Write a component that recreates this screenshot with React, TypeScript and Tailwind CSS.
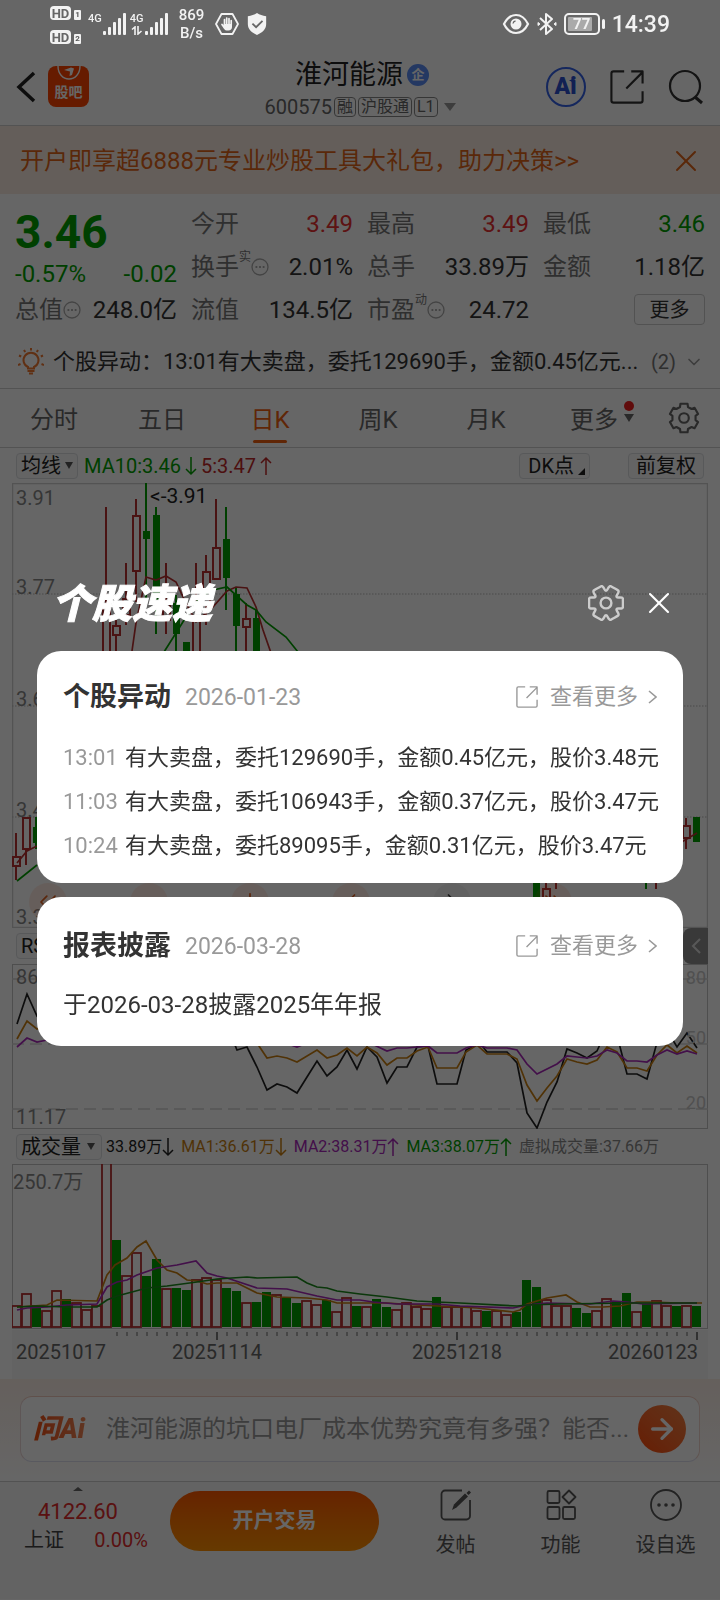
import type { ReactNode } from 'react'
import { ArrowRight, ChevronDown, ChevronLeft, ChevronRight, ChevronsLeft, ChevronsRight, Minus, Plus, X } from 'lucide-react'

type Candle = { i: number; up: boolean; high: number; low: number; top: number; bottom: number }

const candles: Candle[] = [
  { i: 0, up: true, high: 350, low: 397, top: 374, bottom: 383 },
  { i: 1, up: true, high: 334, low: 382, top: 335, bottom: 366 },
  { i: 2, up: false, high: 334, low: 366, top: 344, bottom: 360 },
  { i: 9, up: true, high: 24, low: 240, top: 125, bottom: 240 },
  { i: 10, up: true, high: 137, low: 169, top: 143, bottom: 152 },
  { i: 11, up: true, high: 80, low: 142, top: 116, bottom: 132 },
  { i: 12, up: true, high: 16, low: 119, top: 33, bottom: 88 },
  { i: 13, up: false, high: 0, low: 117, top: 48, bottom: 56 },
  { i: 14, up: false, high: 24, low: 151, top: 32, bottom: 117 },
  { i: 15, up: true, high: 80, low: 151, top: 120, bottom: 137 },
  { i: 16, up: false, high: 112, low: 190, top: 120, bottom: 151 },
  { i: 17, up: false, high: 159, low: 200, top: 159, bottom: 190 },
  { i: 18, up: true, high: 80, low: 190, top: 138, bottom: 176 },
  { i: 19, up: true, high: 72, low: 142, top: 89, bottom: 120 },
  { i: 20, up: true, high: 16, low: 96, top: 65, bottom: 96 },
  { i: 21, up: false, high: 24, low: 127, top: 56, bottom: 95 },
  { i: 22, up: false, high: 104, low: 190, top: 111, bottom: 143 },
  { i: 23, up: true, high: 120, low: 184, top: 136, bottom: 144 },
  { i: 24, up: false, high: 127, low: 200, top: 135, bottom: 190 },
  { i: 52, up: false, high: 385, low: 425, top: 390, bottom: 420 },
  { i: 53, up: true, high: 395, low: 420, top: 406, bottom: 418 },
  { i: 54, up: true, high: 390, low: 406, top: 390, bottom: 396 },
  { i: 63, up: false, high: 380, low: 406, top: 382, bottom: 392 },
  { i: 64, up: true, high: 380, low: 406, top: 382, bottom: 392 },
  { i: 67, up: true, high: 335, low: 366, top: 343, bottom: 355 },
  { i: 68, up: false, high: 334, low: 359, top: 334, bottom: 359 },
]

// positive = up day, negative = down day
const volumes = [
  22, 34, -22, 17, 37, -28, 25, 18, 22, 168, -87, 52, 75, -51, -68, 39, -39, -37, 48, 50, 48, -39, -36, 25, -25, -35, 33,
  -29, -24, 27, 23, -27, 16, 30, -21, 21, -28, -20, 18, 25, 21, 19, -30, 21, 21, 21, 17, -16, 17, 13, -15, -47, -40, 28,
  22, 22, -19, -14, 17, 29, -25, -34, 16, -23, 27, 22, -21, 22, -21,
]

const rsi = {
  fast: '17,60 27,30 37,52 60,40 200,50 227,62 237,86 247,83 257,103 267,126 277,120 287,123 297,129 307,113 317,97 327,112 337,103 347,86 357,105 367,83 377,93 387,119 397,103 407,103 417,83 428,82 437,120 457,120 466,86 480,79 487,88 507,88 517,99 527,149 537,164 547,138 557,118 567,85 577,89 587,94 597,87 602,76 619,79 627,110 637,110 647,115 656,82 667,66 677,83 687,69 697,84',
  mid: '17,75 27,57 37,65 60,56 200,58 252,70 259,82 267,94 277,92 287,94 297,98 317,86 327,94 337,91 347,84 357,92 367,83 377,89 387,101 397,94 407,94 417,87 428,83 437,104 457,104 466,88 477,81 487,90 507,90 517,95 527,121 537,137 547,124 557,112 567,95 577,98 587,100 597,96 607,83 617,88 627,104 637,104 647,107 657,91 667,81 677,89 687,82 697,89',
  slow: '17,83 27,74 37,78 47,76 200,70 288,80 297,83 307,79 370,79 387,87 397,84 407,84 428,82 437,89 457,89 466,84 477,81 487,84 507,84 517,86 527,100 537,110 547,105 557,100 567,92 577,93 587,94 597,92 607,86 617,89 627,97 637,97 647,98 657,91 667,86 677,90 687,87 697,90',
}

const volumeMa = {
  ma1: '17,143 47,141 57,136 97,137 107,111 115,101 127,94 137,83 146,77 157,96 167,106 177,109 187,116 197,117 207,120 217,119 237,119 247,124 257,129 277,133 307,134 327,136 337,139 387,139 417,141 460,143 477,144 513,148 520,146 527,140 537,137 547,134 566,131 577,138 590,143 603,143 620,142 637,138 653,138 677,139 702,139',
  ma2: '17,146 27,144 47,143 67,141 97,140 107,123 117,118 127,116 137,111 157,104 177,101 196,97 207,109 217,112 227,114 257,124 287,125 317,132 337,136 360,136 373,138 397,140 437,140 460,142 513,144 527,141 547,139 590,140 613,137 627,138 643,140 697,139',
  ma3: '17,143 37,142 67,143 97,143 107,136 117,132 147,124 167,122 197,118 217,115 247,113 257,114 297,113 307,119 317,123 327,124 337,127 360,130 387,133 417,137 437,138 460,139 517,142 527,141 560,140 627,139 697,139',
}

const alerts = [
  { time: '13:01', text: '有大卖盘，委托129690手，金额0.45亿元，股价3.48元' },
  { time: '11:03', text: '有大卖盘，委托106943手，金额0.37亿元，股价3.47元' },
  { time: '10:24', text: '有大卖盘，委托89095手，金额0.31亿元，股价3.47元' },
]

const tabs = ['分时', '五日', '日K', '周K', '月K', '更多']

function ring(steps: [number, number][], rotate: number) {
  const points: [number, number][] = []
  for (let k = 0; k < 6; k++) {
    for (const [offset, r] of steps) {
      const a = ((k * 60 + offset + rotate) * Math.PI) / 180
      points.push([12 + r * Math.cos(a), 12 + r * Math.sin(a)])
    }
  }
  return points
}

// six-tooth cog with hard corners
function gearPath(rotate: number) {
  const points = ring([[-14, 11], [14, 11], [20, 8.8], [40, 8.8]], rotate)
  return 'M' + points.map((p) => `${p[0].toFixed(2)} ${p[1].toFixed(2)}`).join('L') + 'Z'
}

// same cog, corners rounded by running curves through the midpoints
function softGearPath(rotate: number) {
  const points = ring([[-19, 11.9], [-8, 11.4], [8, 11.4], [19, 11.9], [30, 7]], rotate)
  const mid = (a: [number, number], b: [number, number]) => `${((a[0] + b[0]) / 2).toFixed(2)} ${((a[1] + b[1]) / 2).toFixed(2)}`
  const n = points.length
  return (
    'M' +
    mid(points[n - 1], points[0]) +
    points.map((p, i) => `Q${p[0].toFixed(2)} ${p[1].toFixed(2)} ${mid(p, points[(i + 1) % n])}`).join('') +
    'Z'
  )
}

function GearIcon({ soft, className }: { soft?: boolean; className: string }) {
  return (
    <svg viewBox="0 0 24 24" className={className} fill="none" stroke="currentColor" strokeWidth="1.6" strokeLinejoin="round">
      <path d={soft ? softGearPath(0) : gearPath(30)} />
      <circle cx="12" cy="12" r="3.6" />
    </svg>
  )
}

function ShareIcon({ className, width = 1.5 }: { className: string; width?: number }) {
  return (
    <svg viewBox="0 0 24 24" className={className} fill="none" stroke="currentColor" strokeWidth={width} strokeLinejoin="round">
      <path d="M10 1H2.500a1.500 1.500 0 0 0-1.500 1.500v19a1.500 1.500 0 0 0 1.500 1.500h19a1.500 1.500 0 0 0 1.500-1.500V15" />
      <path d="M11.500 13L23 1.500M15 1h8v8.500" />
    </svg>
  )
}

function DotsIcon() {
  return (
    <svg viewBox="0 0 18 18" className="size-[18px]" fill="none" stroke="#aaa" strokeWidth="1.300">
      <circle cx="9" cy="9" r="8" />
      <path d="M4.500 9h1.800M8.100 9h1.800M11.700 9h1.800" strokeWidth="1.800" />
    </svg>
  )
}

function Signal() {
  return (
    <svg viewBox="0 0 24 24" className="h-6 w-6" fill="currentColor">
      <rect x="1" y="19" width="3" height="4" rx="1" />
      <rect x="6" y="15" width="3" height="8" rx="1" />
      <rect x="11" y="10" width="3" height="13" rx="1" />
      <rect x="16" y="6" width="3" height="17" rx="1" />
      <rect x="21" y="1" width="3" height="22" rx="1" />
    </svg>
  )
}

function HdBadge({ n }: { n: string }) {
  return (
    <div className="flex items-end gap-[3px]">
      <span className="flex h-[14px] w-[21px] items-center justify-center rounded bg-[#f2f2f2] text-[13px] leading-none font-bold text-[#666]">HD</span>
      <span className="flex h-[10px] w-[7px] items-center justify-center rounded-[1px] bg-[#f2f2f2] text-[8px] leading-none font-bold text-[#555]">{n}</span>
    </div>
  )
}

function StatusBar() {
  return (
    <div className="relative z-20 flex h-12 items-center justify-between pr-[50px] pl-[50px] text-[#f2f2f2]">
      <div className="flex items-center">
        <div className="flex flex-col gap-[10px] pt-[2px]">
          <HdBadge n="1" />
          <HdBadge n="2" />
        </div>
        <div className="ml-[7px] flex items-center">
          <span className="mb-3 text-[11px] leading-none font-medium">4G</span>
          <Signal />
        </div>
        <div className="ml-1 flex items-center">
          <div className="flex flex-col items-center">
            <span className="text-[11px] leading-none font-medium">4G</span>
            <svg viewBox="0 0 12 9" className="mt-[2px] h-[9px] w-3" fill="none" stroke="currentColor" strokeWidth="1.600">
              <path d="M1 3.500L4 1v8M7 0v8L10.500 5" />
            </svg>
          </div>
          <Signal />
        </div>
        <div className="ml-3 flex w-6 flex-col items-center text-[15px] leading-[18px] font-medium">
          <span>869</span>
          <span>B/s</span>
        </div>
        <svg viewBox="0 0 24 24" className="ml-[11px] size-6">
          <path d="M6.500 2h11L23 12l-5.500 10h-11L1 12z" fill="none" stroke="currentColor" strokeWidth="1.800" strokeLinejoin="round" />
          <g stroke="currentColor" strokeWidth="1.700" strokeLinecap="round">
            <path d="M9.500 13V7.500M11.700 12V6M14 12V6.500M16.200 13V8.500M7 12.500l2.500 3.500" />
          </g>
          <path d="M8.700 12h8.300v3c0 2-1.500 3.500-3.500 3.500h-2c-1.500 0-2.800-1.500-2.800-3z" fill="currentColor" />
        </svg>
        <svg viewBox="0 0 24 26" className="ml-[7px] h-6 w-[22px]">
          <path d="M12 1c3 2 6 3 10 3.500V13c0 6-4.500 9.500-10 12C6.500 22.500 2 19 2 13V4.500C6 4 9 3 12 1z" fill="currentColor" />
          <path d="M7 12.500l4 4 7-7" fill="none" stroke="#666" strokeWidth="2" />
        </svg>
      </div>
      <div className="flex items-center gap-[7px]">
        <svg viewBox="0 0 28 22" className="h-[22px] w-7" fill="none" stroke="currentColor">
          <path d="M2 11C5 5 9 2 14 2s9 3 12 9c-3 6-7 9-12 9S5 17 2 11z" strokeWidth="2.200" />
          <circle cx="14" cy="11" r="5.500" fill="currentColor" stroke="none" />
          <path d="M11 10.500a3 3 0 0 1 2.500-2.500" stroke="#666" strokeWidth="1.300" />
        </svg>
        <svg viewBox="0 0 20 24" className="h-6 w-5" fill="none" stroke="currentColor" strokeWidth="2">
          <path d="M3 6l12 11-6 5V2l6 5L3 18" strokeLinejoin="round" />
          <path d="M1 10.500l2 1.500-2 1.500zM19 10.500L17 12l2 1.500z" fill="currentColor" strokeWidth="1" />
        </svg>
        <div className="flex items-center gap-[2px]">
          <div className="flex h-[22px] w-9 rounded-[5px] border-2 border-current p-[2px]">
            <div className="flex w-6 items-center justify-center rounded-[1px] bg-[#aaa]">
              <span className="pl-1 text-[15px] leading-none font-bold">77</span>
            </div>
          </div>
          <span className="h-[10px] w-[3px] rounded-sm bg-current" />
        </div>
        <span className="text-[23px] leading-none font-medium">14:39</span>
      </div>
    </div>
  )
}

function Tag({ children }: { children: ReactNode }) {
  return <span className="flex h-5 items-center rounded border border-[#888] px-[2px] text-base leading-none text-[#666]">{children}</span>
}

function Header() {
  return (
    <header className="grid h-[78px] grid-cols-[1fr_auto_1fr] items-center border-b border-[#d0d0d0] px-4">
      <div className="flex items-center gap-3">
        <button aria-label="返回">
          <svg viewBox="0 0 20 32" className="h-8 w-5" fill="none" stroke="#222" strokeWidth="3.500">
            <path d="M18 2L3 16l15 14" />
          </svg>
        </button>
        <button className="flex size-[41px] flex-col items-center overflow-hidden rounded-lg bg-[#ff4400] text-white">
          <svg viewBox="0 0 24 16" className="h-4 w-6 shrink-0" fill="none" stroke="currentColor" strokeWidth="1.400">
            <path d="M1 0c0 8 5 13 11 13s11-5 11-13" />
            <path d="M7 4l7-2.500 3 1-2 6.500-2.500 1 .5-4.500z" fill="currentColor" stroke="none" />
          </svg>
          <span className="text-[14px] leading-5 font-bold">股吧</span>
        </button>
      </div>
      <div className="flex flex-col items-center pt-1">
        <div className="flex items-center gap-1">
          <h1 className="pl-1 text-[27px] leading-9 text-[#222]">淮河能源</h1>
          <span className="flex size-[22px] items-center justify-center rounded-full bg-[#5a8cf5] text-[13px] leading-none font-bold text-white">企</span>
        </div>
        <div className="flex h-7 items-center gap-[2px]">
          <span className="text-xl leading-none text-[#666]">600575</span>
          <Tag>融</Tag>
          <Tag>沪股通</Tag>
          <Tag>L1</Tag>
          <svg viewBox="0 0 12 8" className="ml-1 h-2 w-3" fill="#999">
            <path d="M0 0h12L6 8z" />
          </svg>
        </div>
      </div>
      <div className="flex items-center justify-end gap-6">
        <button aria-label="Ai" className="relative flex size-10 items-center justify-center rounded-full border-2 border-[#3563e8] pr-px text-[23px] leading-none font-black text-[#2c50d0]">
          Ai
          <svg viewBox="0 0 8 8" className="absolute top-2 right-2 size-[7px]" fill="currentColor">
            <path d="M4 0l1.200 2.800L8 4 5.200 5.200 4 8 2.800 5.200 0 4l2.800-1.200z" />
          </svg>
        </button>
        <button aria-label="分享">
          <ShareIcon className="size-[34px] text-[#333]" width={1.500} />
        </button>
        <button aria-label="搜索">
          <svg viewBox="0 0 36 36" className="size-9" fill="none" stroke="#333" strokeWidth="2.200">
            <circle cx="17" cy="17" r="15" />
            <path d="M27 28l7 6" strokeWidth="3" />
          </svg>
        </button>
      </div>
    </header>
  )
}

function Cell({ label, sup, info, value, color = 'text-[#333]' }: { label: string; sup?: string; info?: boolean; value: string; color?: string }) {
  return (
    <div className="flex h-[43px] items-center justify-between">
      <div className="flex h-full items-center text-[#777]">
        <span>{label}</span>
        {sup && <span className="mt-1 self-start text-xs leading-4">{sup}</span>}
        {info && <DotsIcon />}
      </div>
      <span className={color}>{value}</span>
    </div>
  )
}

function Quote() {
  return (
    <section className="grid grid-cols-4 gap-x-[14px] px-[15px] pt-2 text-2xl leading-8">
      <div>
        <div className="flex h-[57px] items-center pt-[2px] text-[46px] leading-none font-bold text-[#00a000]">3.46</div>
        <div className="flex h-[29px] items-center justify-between text-[#00a000]">
          <span>-0.57%</span>
          <span>-0.02</span>
        </div>
        <Cell label="总值" info value="248.0亿" />
      </div>
      <div>
        <Cell label="今开" value="3.49" color="text-[#e83030]" />
        <Cell label="换手" sup="实" info value="2.01%" />
        <Cell label="流值" value="134.5亿" />
      </div>
      <div>
        <Cell label="最高" value="3.49" color="text-[#e83030]" />
        <Cell label="总手" value="33.89万" />
        <Cell label="市盈" sup="动" info value="24.72" />
      </div>
      <div>
        <Cell label="最低" value="3.46" color="text-[#00a000]" />
        <Cell label="金额" value="1.18亿" />
        <div className="flex h-[43px] items-center justify-end">
          <button className="h-[31px] w-[71px] rounded border border-[#ccc] text-xl leading-none text-[#333]">更多</button>
        </div>
      </div>
    </section>
  )
}

function AlertRow() {
  return (
    <div className="flex h-[58px] items-center border-b border-[#d0d0d0] pt-1 pr-4 pl-[18px] text-[22px] text-[#333]">
      <svg viewBox="0 0 26 27" className="mr-[9px] h-[27px] w-[26px] shrink-0" fill="none" stroke="#f07830" strokeWidth="2">
        <path d="M10 20.500v-1.500a7.500 7.500 0 1 1 6 0v1.500z" />
        <path d="M9.500 23h7M11 25.500h4" />
        <path d="M13 0v2.500M6 2l1.200 2M20 2l-1.200 2M1 7.500l2.200 1M25 7.500l-2.200 1M0 17l2.500-1M26 17l-2.500-1" />
      </svg>
      <p className="min-w-0 flex-1 truncate">个股异动：13:01有大卖盘，委托129690手，金额0.45亿元...</p>
      <span className="ml-1 text-xl text-[#777]">(2)</span>
      <ChevronDown className="ml-2 size-5 text-[#999]" strokeWidth={2} />
    </div>
  )
}

function Tabs() {
  return (
    <nav className="flex h-[59px] border-b border-[#d0d0d0] text-2xl text-[#666]">
      {tabs.map((tab) => (
        <button key={tab} className={`relative flex flex-1 items-center justify-center pt-1 ${tab === '日K' ? 'text-[#f06010]' : ''}`}>
          {tab}
          {tab === '日K' && <span className="absolute bottom-1 h-[3px] w-[34px] rounded-full bg-[#f06010]" />}
          {tab === '更多' && (
            <span className="absolute top-3 right-[14px] flex flex-col items-center gap-[3px]">
              <span className="size-[10px] rounded-full bg-[#f02020]" />
              <svg viewBox="0 0 10 8" className="h-2 w-[10px]" fill="#666">
                <path d="M0 0h10L5 8z" />
              </svg>
            </span>
          )}
        </button>
      ))}
      <button aria-label="设置" className="flex w-[72px] items-center justify-center">
        <GearIcon className="size-8 text-[#666]" />
      </button>
    </nav>
  )
}

function Chip({ children }: { children: ReactNode }) {
  return (
    <button className="flex h-[26px] items-center gap-1 rounded border border-[#dcdfe2] bg-[#fafafa] px-1 text-xl leading-none whitespace-nowrap text-[#222]">
      {children}
    </button>
  )
}

function Caret() {
  return (
    <svg viewBox="0 0 8 7" className="h-[7px] w-2" fill="#555">
      <path d="M0 0h8L4 7z" />
    </svg>
  )
}

// thin arrow after each moving average
function Trend({ down }: { down?: boolean }) {
  return (
    <svg viewBox="0 0 12 20" className="h-5 w-3" fill="none" stroke="currentColor" strokeWidth="1.500">
      {down ? <path d="M6 1v17M1 13l5 5 5-5" /> : <path d="M6 19V2M1 7l5-5 5 5" />}
    </svg>
  )
}

function Line({ points, color }: { points: string; color: string }) {
  return <polyline points={points} fill="none" stroke={color} strokeWidth="1.700" />
}

const tools = [
  { label: '最左', icon: ChevronsLeft, className: 'bg-[#ff6020]/12 text-[#e06020]' },
  { label: '缩小', icon: Minus, className: 'bg-[#ff6020]/12 text-[#e06020]' },
  { label: '放大', icon: Plus, className: 'bg-[#ff6020]/12 text-[#e06020]' },
  { label: '左移', icon: ChevronLeft, className: 'bg-[#ff6020]/12 text-[#e06020]' },
  { label: '右移', icon: ChevronRight, className: 'bg-black/5 text-[#444]' },
  { label: '最右', icon: ChevronsRight, className: 'bg-[#ff6020]/12 text-[#e06020]' },
]

function KLineChart() {
  return (
    <div className="relative text-xl leading-6 text-[#888]">
      <svg viewBox="12 0 696 445" preserveAspectRatio="none" className="block h-[445px] w-full">
        <rect x="12.500" y="0.500" width="695" height="444" fill="none" stroke="#d0d0d0" strokeWidth="1.500" />
        {[111, 223, 334].map((y) => (
          <line key={y} x1="12" x2="708" y1={y} y2={y} stroke="#bbb" strokeDasharray="1.500 1.500" />
        ))}
        {candles.map((c) => {
          const x = 17 + c.i * 10 - 1
          const color = c.up ? '#b83030' : '#00a000'
          return (
            <g key={c.i} stroke={color} strokeWidth="2">
              <line x1={x} x2={x} y1={c.high} y2={c.top} />
              <line x1={x} x2={x} y1={c.bottom} y2={c.low} />
              {c.up ? (
                <rect x={x - 3} y={c.top} width="7" height={c.bottom - c.top} fill="none" />
              ) : (
                <rect x={x - 3} y={c.top} width="7" height={c.bottom - c.top} fill={color} stroke="none" />
              )}
            </g>
          )
        })}
        <Line color="#b83030" points="17,380 27,368 37,363" />
        <Line color="#00a000" points="17,398 37,382" />
        <Line color="#b83030" points="132,168 136,140 146,94 156,97 166,93 176,99 186,120 196,139 213,124 227,108 236,104 247,105 256,124 263,147 271,170" />
        <Line color="#00a000" points="164,169 176,150 186,134 200,114 213,107 227,104 247,122 256,127 266,139 286,154 298,169" />
        <Line color="#b83030" points="680,360 697,350" />
      </svg>
      <span className="absolute top-[3px] left-1">3.91</span>
      <span className="absolute top-[92px] left-1">3.77</span>
      <span className="absolute top-[204px] left-1">3.63</span>
      <span className="absolute top-[315px] left-1">3.49</span>
      <span className="absolute top-[422px] left-1">3.35</span>
      <span className="absolute top-[1px] left-[138px] text-[21px] text-[#222]">&lt;-3.91</span>
      <div className="absolute bottom-[7px] left-[17px] flex gap-[63px]">
        {tools.map(({ label, icon: Icon, className }) => (
          <button key={label} aria-label={label} className={`flex size-[38px] items-center justify-center rounded-full ${className}`}>
            <Icon className="size-7" strokeWidth={1.500} />
          </button>
        ))}
      </div>
    </div>
  )
}

function RsiChart() {
  return (
    <div className="relative text-xl leading-6 text-[#888]">
      <svg viewBox="12 0 696 165" preserveAspectRatio="none" className="block h-[165px] w-full">
        <rect x="12.500" y="0.500" width="695" height="164" fill="none" stroke="#c4c4c4" />
        {[15, 80, 145].map((y) => (
          <line key={y} x1="12" x2="708" y1={y} y2={y} stroke="#d4d4d4" strokeWidth="1.500" strokeDasharray="12 6" />
        ))}
        <Line color="#222" points={rsi.fast} />
        <Line color="#c87e10" points={rsi.mid} />
        <Line color="#a828b8" points={rsi.slow} />
      </svg>
      <span className="absolute top-[1px] left-1">86.44</span>
      <span className="absolute bottom-0 left-1">11.17</span>
      <span className="absolute top-[2px] right-[2px] text-lg leading-6 text-[#c8c8c8]">80</span>
      <span className="absolute top-[62px] right-[2px] text-lg leading-6 text-[#c8c8c8]">50</span>
      <span className="absolute top-[127px] right-[2px] text-lg leading-6 text-[#c8c8c8]">20</span>
    </div>
  )
}

function VolumeChart() {
  return (
    <div className="relative">
      <svg viewBox="12 0 696 178" preserveAspectRatio="none" className="block h-[178px] w-full">
        <rect x="12" y="166" width="696" height="12" fill="#f7f7f7" />
        <rect x="12.500" y="0.500" width="695" height="164" fill="none" stroke="#c4c4c4" />
        {volumes.map((v, i) => {
          const h = Math.abs(v)
          const x = 12 + i * 10
          return v > 0 ? (
            <rect key={i} x={x} y={163 - h + 1} width="9" height={h - 1} fill="none" stroke="#b83030" strokeWidth="1.800" />
          ) : (
            <rect key={i} x={x} y={163 - h} width="9" height={h} fill="#00a000" />
          )
        })}
        <Line color="#c87e10" points={volumeMa.ma1} />
        <Line color="#a828b8" points={volumeMa.ma2} />
        <Line color="#1c8a1c" points={volumeMa.ma3} />
        {Array.from({ length: 59 }, (_, k) => {
          const i = k + 10
          const major = i === 20 || i === 44 || i === 68
          return <line key={i} x1={17 + i * 10} x2={17 + i * 10} y1="168" y2={major ? 176 : 172} stroke={major ? '#555' : '#999'} strokeWidth="1.500" />
        })}
      </svg>
      <span className="absolute top-[6px] left-[1px] text-xl leading-6 text-[#888]">250.7万</span>
      <div className="grid h-[37px] grid-cols-[105fr_200fr_280fr_111fr] bg-[#f7f7f7] text-xl leading-5 text-[#666]">
        <span className="pl-1">20251017</span>
        <span className="text-center">20251114</span>
        <span className="text-center">20251218</span>
        <span className="pr-[10px] text-right">20260123</span>
      </div>
    </div>
  )
}

function Charts() {
  return (
    <section className="px-3">
      <div className="flex h-[35px] items-center px-1 text-xl">
        <Chip>
          <span>均线</span>
          <Caret />
        </Chip>
        <span className="ml-[6px] flex items-center gap-1 text-[#00a000]">
          MA10:3.46
          <Trend down />
        </span>
        <span className="ml-1 flex items-center gap-1 text-[#c02828]">
          5:3.47
          <Trend />
        </span>
        <span className="ml-auto flex gap-[38px]">
          <Chip>
            <span className="pl-1">DK点</span>
            <svg viewBox="0 0 7 7" className="mt-3 size-[7px]" fill="#222">
              <path d="M7 0v7H0z" />
            </svg>
          </Chip>
          <Chip>
            <span className="px-[3px]">前复权</span>
          </Chip>
        </span>
      </div>
      <KLineChart />
      <div className="flex h-9 items-center justify-between pl-1">
        <Chip>
          <span>RSI</span>
          <Caret />
        </Chip>
        <button aria-label="展开" className="flex h-9 w-[25px] items-center justify-center rounded-l-lg bg-[#909090]">
          <svg viewBox="0 0 10 16" className="h-4 w-[10px]" fill="none" stroke="#ddd" strokeWidth="2">
            <path d="M9 1L2 8l7 7" />
          </svg>
        </button>
      </div>
      <RsiChart />
      <div className="flex h-[35px] items-center overflow-hidden pl-1 text-base whitespace-nowrap">
        <Chip>
          <span>成交量</span>
          <span className="px-[2px]">
            <Caret />
          </span>
        </Chip>
        <span className="ml-1 flex items-center text-[#222]">
          33.89万
          <Trend down />
        </span>
        <span className="ml-[7px] flex items-center text-[#c87e10]">
          MA1:36.61万
          <Trend down />
        </span>
        <span className="ml-[7px] flex items-center text-[#a828b8]">
          MA2:38.31万
          <Trend />
        </span>
        <span className="ml-[7px] flex items-center text-[#00a000]">
          MA3:38.07万
          <Trend />
        </span>
        <span className="ml-[7px] text-[#888]">虚拟成交量:37.66万</span>
      </div>
      <VolumeChart />
    </section>
  )
}

function AskBar() {
  return (
    <div className="h-[103px] border-b border-[#ccc] bg-linear-to-b from-[#fcefe7] to-white px-5 pt-[17px]">
      <form className="flex h-[66px] items-center rounded-xl border border-t-[#f0c8bc] border-r-[#f0d4cc] border-b-[#dedeee] border-l-[#ecd6d6] bg-white pr-[13px] pl-3">
        <span className="bg-linear-to-r from-[#f04a00] to-[#f08858] bg-clip-text pr-1 text-[27px] leading-8 font-black text-transparent italic">问Ai</span>
        <input
          type="text"
          aria-label="问Ai"
          placeholder="淮河能源的坑口电厂成本优势究竟有多强？能否..."
          className="ml-[17px] min-w-0 flex-1 bg-transparent text-2xl text-ellipsis outline-none placeholder:text-[#999]"
        />
        <button type="button" aria-label="提问" className="flex size-12 shrink-0 items-center justify-center rounded-full bg-linear-to-tr from-[#ff4800] to-[#f08040] text-white">
          <ArrowRight className="size-8" strokeWidth={2.500} />
        </button>
      </form>
    </div>
  )
}

function NavItem({ label, children }: { label: string; children: ReactNode }) {
  return (
    <button className="flex w-[105px] flex-col items-center gap-2 pt-[7px] text-xl leading-8 text-[#555]">
      <svg viewBox="0 0 32 32" className="size-8" fill="none" stroke="#555" strokeWidth="1.800">
        {children}
      </svg>
      {label}
    </button>
  )
}

function BottomNav() {
  return (
    <footer className="flex h-[117px] items-start bg-[#f7f7f7] pr-[2px]">
      <a href="#index" className="flex w-[170px] flex-col pt-[5px]">
        <svg viewBox="0 0 10 4" className="ml-[73px] h-1 w-[10px]" fill="#666">
          <path d="M5 0l5 4H0z" />
        </svg>
        <span className="pt-[5px] pl-[38px] text-[22px] leading-8 text-[#e02c2c]">4122.60</span>
        <span className="flex justify-between pr-[22px] pl-6 text-xl leading-6">
          <span className="text-[#444]">上证</span>
          <span className="text-[#e02c2c]">0.00%</span>
        </span>
      </a>
      <button className="mt-[9px] mr-6 h-[60px] flex-1 rounded-full bg-linear-to-b from-[#ff5800] to-[#ff9000] text-[21px] font-bold text-white">
        开户交易
      </button>
      <NavItem label="发帖">
        <path d="M22 1.500H5A3.500 3.500 0 0 0 1.500 5v22A3.500 3.500 0 0 0 5 30.500h21.500a3.500 3.500 0 0 0 3.500-3.500V11" />
        <path d="M12 21l2-5.500L25 4.500l3 3L16.500 18.500z" fill="#555" stroke="none" />
        <path d="M26.500 4L29 1.500l2 2L28.500 6z" fill="#555" stroke="none" />
      </NavItem>
      <NavItem label="功能">
        <rect x="2.500" y="2" width="12" height="12" rx="1.500" />
        <rect x="2.500" y="18" width="12" height="12" rx="1.500" />
        <rect x="18" y="18" width="12" height="12" rx="1.500" />
        <path d="M24 1.500l6.500 6.500-6.500 6.500L17.500 8z" strokeLinejoin="round" />
      </NavItem>
      <NavItem label="设自选">
        <circle cx="16" cy="16" r="15" />
        <g fill="#555" stroke="none">
          <circle cx="9" cy="16" r="1.800" />
          <circle cx="16" cy="16" r="1.800" />
          <circle cx="23" cy="16" r="1.800" />
        </g>
      </NavItem>
    </footer>
  )
}

function CardHead({ title, date }: { title: string; date: string }) {
  return (
    <div className="flex h-[42px] items-center justify-between">
      <div className="flex items-center gap-[14px]">
        <h3 className="text-[27px] leading-none font-bold text-[#333]">{title}</h3>
        <span className="text-[23px] leading-none text-[#999]">{date}</span>
      </div>
      <a href="#more" className="flex items-center text-[22px] leading-8 text-[#999]">
        <ShareIcon className="mr-3 size-[22px]" width={1.500} />
        查看更多
        <svg viewBox="0 0 9 14" className="ml-[10px] h-[14px] w-[9px]" fill="none" stroke="currentColor" strokeWidth="1.600">
          <path d="M1 1l7 6-7 6" />
        </svg>
      </a>
    </div>
  )
}

function StockNewsDialog() {
  return (
    <div role="dialog" aria-labelledby="dialog-title" className="fixed inset-0 z-10 flex flex-col justify-center bg-black/60 px-[37px]">
      <div className="flex h-[97px] items-center justify-between pr-[6px] pl-[15px]">
        <h2 id="dialog-title" className="pt-1 text-[40px] leading-none font-black text-white italic [-webkit-text-stroke:1px_white]">
          个股速递
        </h2>
        <div className="flex items-center gap-[17px]">
          <button aria-label="设置">
            <GearIcon soft className="size-9 text-[#ccc]" />
          </button>
          <button aria-label="关闭">
            <X className="size-9 text-white" strokeWidth={1.400} />
          </button>
        </div>
      </div>
      <section className="rounded-3xl bg-white px-[26px] pt-[25px] pb-[15px]">
        <CardHead title="个股异动" date="2026-01-23" />
        <ul className="mt-[18px] text-[22px] leading-[44px]">
          {alerts.map((alert) => (
            <li key={alert.time} className="flex whitespace-nowrap">
              <span className="w-[62px] shrink-0 text-[#999]">{alert.time}</span>
              <span className="text-[#333]">{alert.text}</span>
            </li>
          ))}
        </ul>
      </section>
      <section className="mt-[14px] rounded-3xl bg-white px-[26px] pt-7 pb-[19px]">
        <CardHead title="报表披露" date="2026-03-28" />
        <p className="mt-4 text-2xl leading-[44px] text-[#333]">于2026-03-28披露2025年年报</p>
      </section>
    </div>
  )
}

export default function App() {
  return (
    <div className="min-h-screen bg-white font-['Roboto','Noto_Sans_CJK_SC',sans-serif]">
      <StatusBar />
      <Header />
      <div className="flex h-[68px] items-center justify-between bg-[#faece2] pt-[2px] pr-4 pl-5 text-[#e06418]">
        <a href="#promo" className="text-2xl">
          开户即享超6888元专业炒股工具大礼包，助力决策&gt;&gt;
        </a>
        <button aria-label="关闭广告">
          <X className="size-9" strokeWidth={1.300} />
        </button>
      </div>
      <Quote />
      <AlertRow />
      <Tabs />
      <Charts />
      <AskBar />
      <BottomNav />
      <StockNewsDialog />
    </div>
  )
}
